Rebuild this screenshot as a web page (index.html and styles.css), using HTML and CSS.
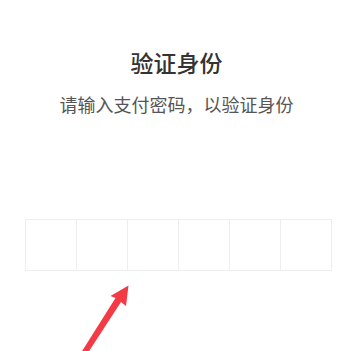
FILE: index.html
```html
<!DOCTYPE html>
<html lang="zh-CN">
<head>
  <meta charset="UTF-8" />
  <meta name="viewport" content="width=device-width, initial-scale=1.0">
  <title>验证身份</title>
  <link rel="stylesheet" href="styles.css">
</head>
<body>

  <div class="verify-page">
    <h1 class="verify-title">验证身份</h1>
    <p class="verify-tip">请输入支付密码，以验证身份</p>

    <!-- 密码格子 -->
    <div class="pwd-box">
      <div class="pwd-cell"></div>
      <div class="pwd-cell"></div>
      <div class="pwd-cell"></div>
      <div class="pwd-cell"></div>
      <div class="pwd-cell"></div>
      <div class="pwd-cell"></div>
    </div>

    <!-- 标注箭头 -->
    <svg class="mark-arrow" width="60" height="70" viewBox="75 281 60 70">
      <polygon points="128.5,285.5 126,306 121,302 88.5,352 81.5,352 115.5,298 110.5,296" fill="#f33a45" />
    </svg>
  </div>

</body>
</html>
```

FILE: styles.css
```css
body {
  margin: 0;
  padding: 0;
  background-color: #fff;
  font-family: "Noto Sans CJK SC", "Noto Sans", sans-serif;
}

.verify-page {
  position: relative;
  height: 351px;
  overflow: hidden;
  padding-top: 47px;
  box-sizing: border-box;
}

.verify-title {
  margin: 0;
  font-size: 23px;
  line-height: 30px;
  font-weight: 500;
  color: #333;
  text-align: center;
}

.verify-tip {
  margin: 15px 0 0;
  font-size: 18px;
  line-height: 24px;
  color: #555;
  text-align: center;
}

.pwd-box {
  display: flex;
  width: 306px;
  margin: 103px 0 0 25px;
  border-top: 1px solid #eee;
  border-bottom: 1px solid #eee;
  border-right: 1px solid #eee;
}

.pwd-cell {
  flex: 1;
  height: 50px;
  border-left: 1px solid #eee;
}

.mark-arrow {
  position: absolute;
  left: 75px;
  top: 281px;
}
```
